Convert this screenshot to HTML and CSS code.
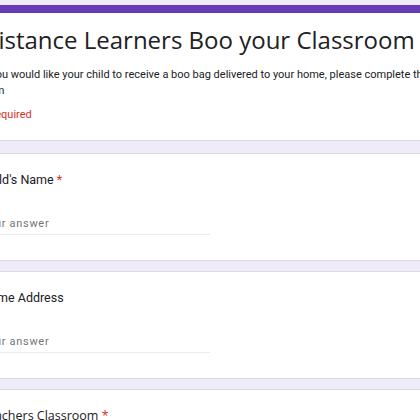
FILE: index.html
```html
<!DOCTYPE html>
<html lang="en">
<head>
    <meta charset="UTF-8">
    <title>Distance Learners Boo your Classroom</title>
    <link rel="stylesheet" href="styles.css">
</head>
<body>
    <div class="form">
        <!-- HEADER CARD -->
        <div class="card card-header">
            <h1 class="form-title">Distance Learners Boo your Classroom</h1>
            <p class="form-desc">If you would like your child to receive a boo bag delivered to your home, please complete this form</p>
            <p class="required-note">* Required</p>
        </div>

        <div class="card question">
            <div class="q-label">Child's Name <span class="star">*</span></div>
            <div class="answer">Your answer</div>
        </div>

        <div class="card question">
            <div class="q-label">Home Address</div>
            <div class="answer">Your answer</div>
        </div>

        <div class="card question">
            <div class="q-label q-label-alt">Teachers Classroom <span class="star">*</span></div>
            <div class="answer">Your answer</div>
        </div>
    </div>
</body>
</html>
```

FILE: styles.css
```css
:root {
    --bg-color: #f0ebf8;
    --card-border: #dadce0;
    --primary-color: #673ab7;
    --text-color: #202124;
    --muted-color: #757575;
    --error-color: #d93025;
    --font-family: Roboto, 'Liberation Sans', Arial, sans-serif;
    --title-font: 'Open Sans', Roboto, sans-serif;
}

body {
    margin: 0;
    background-color: var(--bg-color);
    font-family: var(--font-family);
    color: var(--text-color);
}

/* form column, pushed left so the card edges fall outside the window */
.form {
    margin-left: -39px;
    width: 640px;
    padding-top: 5px;
}

.card {
    background-color: #fff;
    border: 1px solid var(--card-border);
    border-radius: 6px;
    padding: 0 19px;
    margin-bottom: 10px;
}

.card-header {
    border-top: 8px solid var(--primary-color);
    padding-top: 10px;
    padding-bottom: 17px;
    margin-bottom: 12px;
}
.form-title {
    font-family: var(--title-font);
    font-weight: 400;
    font-size: 24px;
    line-height: 34px;
    margin: 0;
}
.form-desc {
    font-size: 11px;
    line-height: 16px;
    margin: 9.5px 0 0;
    width: 455px;
}
.required-note {
    color: var(--error-color);
    font-size: 11px;
    line-height: 16px;
    margin: 8.5px 0 0;
}

/* question cards */
.question {
    padding-top: 14px;
    padding-bottom: 25px;
}
.q-label {
    font-size: 12.5px;
    line-height: 24px;
}
.q-label-alt {
    font-family: var(--title-font);
}
.star {
    color: var(--error-color);
}
.answer {
    margin-top: 24px;
    width: 229px;
    font-size: 11px;
    letter-spacing: 0.7px;
    color: var(--muted-color);
    line-height: 16px;
    padding-bottom: 2px;
    border-bottom: 1px solid #ebebeb;
}
```
